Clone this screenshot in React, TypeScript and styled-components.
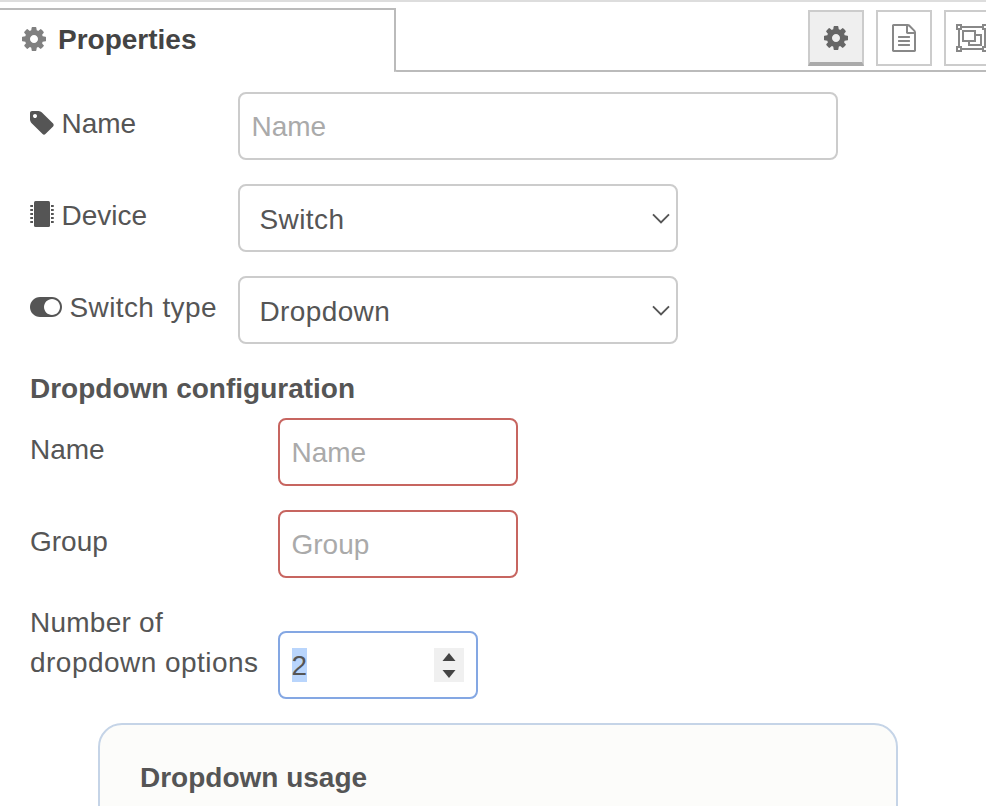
import React from "react";
import styled, { createGlobalStyle, css } from "styled-components";

const GlobalStyle = createGlobalStyle`
  *, *::before, *::after { box-sizing: border-box; }
  body {
    margin: 0;
    background: #fff;
    overflow: hidden;
  }
`;

const Editor = styled.main`
  width: 986px;
  height: 806px;
  overflow: hidden;
  border-top: 2px solid #ddd;
  background: #fff;
  color: #555;
  font: 28px/40px "Liberation Sans", Arial, sans-serif;
`;

const TabBar = styled.header`
  display: flex;
  height: 70px;
  padding-top: 6px;
`;

const ActiveTab = styled.div`
  display: flex;
  align-items: center;
  gap: 12px;
  width: 396px;
  height: 64px;
  padding: 0 0 4px 22px;
  border-top: 2px solid #bbb;
  border-right: 2px solid #bbb;
  border-bottom-right-radius: 2px;
  color: #444;
  font-weight: bold;
`;

const Text = styled.span<{ $spacing?: number }>`
  padding-top: 2px;
  letter-spacing: ${(p) => p.$spacing ?? 0}px;
`;

const TabActions = styled.div`
  display: flex;
  flex: 1;
  gap: 12px;
  height: 64px;
  margin-left: -2px;
  padding: 2px 0 0 414px;
  border-bottom: 2px solid #bbb;
  border-bottom-left-radius: 3px;
  overflow: hidden;
`;

const TabButton = styled.button<{ $active?: boolean }>`
  display: flex;
  flex: none;
  align-items: center;
  justify-content: center;
  width: 56px;
  height: 56px;
  padding: 0;
  border: 2px solid #ccc;
  background: #fff;
  color: #888;
  ${(p) =>
    p.$active &&
    css`
      border-bottom: 4px solid #aaa;
      padding-top: 2px;
      background: #efefef;
      color: #666;
    `}
`;

const Icon = styled.svg<{ $tone?: string }>`
  display: block;
  flex: none;
  fill: ${(p) => p.$tone ?? "currentColor"};
`;

const Form = styled.form`
  display: flex;
  flex-direction: column;
  padding: 20px 30px 0;
`;

const Row = styled.div<{ $labelWidth: number }>`
  display: grid;
  grid-template-columns: ${(p) => p.$labelWidth}px auto;
  justify-content: start;
  margin-bottom: 24px;
`;

const Label = styled.label<{ $gap?: number }>`
  display: flex;
  align-items: center;
  align-self: start;
  gap: ${(p) => p.$gap ?? 7.5}px;
  height: 40px;
  margin-top: 11px;
  white-space: nowrap;
`;

const WrappedLabel = styled.label`
  display: flex;
  flex-direction: column;
  width: 240px;
  padding-top: 1px;
`;

const LabelLine = styled.span<{ $spacing: number }>`
  height: 40px;
  letter-spacing: ${(p) => p.$spacing}px;
  white-space: nowrap;
`;

const box = css`
  height: 68px;
  border: 2px solid #ccc;
  border-radius: 8px;
  background: #fff;
  color: #555;
  font: inherit;
`;

const TextInput = styled.input<{ $width: number; $invalid?: boolean }>`
  ${box}
  width: ${(p) => p.$width}px;
  padding: 2px 12px 0 11.5px;
  border-color: ${(p) => (p.$invalid ? "#c76560" : "#ccc")};
  outline: none;
  &::placeholder {
    color: #aaa;
    opacity: 1;
  }
`;

const Select = styled.div`
  ${box}
  display: flex;
  align-items: center;
  justify-content: space-between;
  width: 440px;
  padding: 2px 6px 0 19.5px;
`;

const NumberInput = styled.div`
  ${box}
  display: flex;
  align-items: center;
  justify-content: space-between;
  width: 200px;
  margin-top: 29px;
  padding: 0 12px;
  border-color: #84a7e3;
`;

const Selected = styled.span`
  width: 15px;
  height: 34px;
  background: #b9d5fc;
  line-height: 36px;
  text-indent: -0.5px;
`;

const Stepper = styled.span`
  display: flex;
  align-items: center;
  justify-content: center;
  width: 30px;
  height: 34px;
  background: #f0f0f0;
`;

const Heading = styled.h4<{ $after?: number }>`
  margin: 0 0 ${(p) => p.$after ?? 0}px;
  padding-top: 1px;
  font: bold 28px/40px "Liberation Sans", Arial, sans-serif;
`;

const Usage = styled.section`
  width: 800px;
  height: 240px;
  margin-left: 68px;
  padding: 32px 40px;
  border: 2px solid #c5d4e7;
  border-radius: 24px;
  background: #fcfcfa;
`;

const CogIcon = ({ tone }: { tone?: string }) => (
  <Icon $tone={tone} width="24" height="24" viewBox="128 128 1536 1536">
    <path d="M1152 896q0-106-75-181t-181-75-181 75-75 181 75 181 181 75 181-75 75-181zm512-109v222q0 12-8 23t-20 13l-185 28q-19 54-39 91 35 50 107 138 10 12 10 25t-9 23q-27 37-99 108t-94 71q-12 0-26-9l-138-108q-44 23-91 38-16 136-29 186-7 28-36 28h-222q-14 0-24.5-8.5t-11.5-21.5l-28-184q-49-16-90-37l-141 107q-10 9-25 9-14 0-25-11-126-114-165-168-7-10-7-23 0-12 8-23 15-21 51-66.5t54-70.5q-27-50-41-99l-183-27q-13-2-21-12.5t-8-23.5v-222q0-12 8-23t19-13l186-28q14-46 39-92-40-57-107-138-10-12-10-24 0-10 9-23 26-36 98.5-107.5t94.5-71.5q13 0 26 10l138 107q44-23 91-38 16-136 29-186 7-28 36-28h222q14 0 24.5 8.5t11.5 21.5l28 184q49 16 90 37l142-107q9-9 24-9 13 0 25 10 129 119 165 170 7 8 7 22 0 12-8 23-15 21-51 66.5t-54 70.5q26 50 41 98l183 28q13 2 21 12.5t8 23.5z" />
  </Icon>
);

const FileIcon = () => (
  <Icon width="24" height="28" viewBox="128 0 1536 1792">
    <path d="M1596 380q28 28 48 76t20 88v1152q0 40-28 68t-68 28h-1344q-40 0-68-28t-28-68v-1600q0-40 28-68t68-28h896q40 0 88 20t76 48zm-444-244v376h376q-10-29-22-41l-313-313q-12-12-41-22zm384 1528v-1024h-416q-40 0-68-28t-28-68v-416h-768v1536h1280zm-1024-864q0-14 9-23t23-9h704q14 0 23 9t9 23v64q0 14-9 23t-23 9h-704q-14 0-23-9t-9-23v-64zm736 224q14 0 23 9t9 23v64q0 14-9 23t-23 9h-704q-14 0-23-9t-9-23v-64q0-14 9-23t23-9h704zm0 256q14 0 23 9t9 23v64q0 14-9 23t-23 9h-704q-14 0-23-9t-9-23v-64q0-14 9-23t23-9h704z" />
  </Icon>
);

const GroupIcon = () => (
  <Icon $tone="none" width="32" height="28" viewBox="0 0 32 28" stroke="currentColor" strokeWidth="2">
    <path d="M6 3h20M6 25h20M3 6v16M29 6v16" />
    <path d="M1 1h4v4h-4zM27 1h4v4h-4zM1 23h4v4h-4zM27 23h4v4h-4z" />
    <path d="M7 7h12v10h-12zM20 11h5v10h-12v-3" />
  </Icon>
);

const TagIcon = () => (
  <Icon width="24" height="24" viewBox="128 128 1536 1536">
    <path d="M576 448q0-53-37.5-90.5t-90.5-37.5-90.5 37.5-37.5 90.5 37.5 90.5 90.5 37.5 90.5-37.5 37.5-90.5zm1067 576q0 53-37 90l-491 492q-39 37-91 37-53 0-90-37l-715-716q-38-37-64.5-101t-26.5-117v-416q0-52 38-90t90-38h416q53 0 117 26.5t102 64.5l715 714q37 39 37 91z" />
  </Icon>
);

const ChipIcon = () => (
  <Icon width="24" height="28" viewBox="0 0 24 28">
    <rect x="4" y="0" width="16" height="26" rx="1.5" />
    {[4, 8, 12, 16, 20].map((y) => (
      <path key={y} d={`M1 ${y}h2v2h-2l-1-.5v-1zM21 ${y}h2l1 .5v1l-1 .5h-2z`} />
    ))}
  </Icon>
);

const ToggleIcon = () => (
  <Icon width="32" height="20" viewBox="0 256 2048 1280">
    <path d="M0 896q0-130 51-248.5t136.5-204 204-136.5 248.5-51h768q130 0 248.5 51t204 136.5 136.5 204 51 248.5-51 248.5-136.5 204-204 136.5-248.5 51h-768q-130 0-248.5-51t-204-136.5-136.5-204-51-248.5zm1408 512q104 0 198.5-40.5t163.5-109.5 109.5-163.5 40.5-198.5-40.5-198.5-109.5-163.5-163.5-109.5-198.5-40.5-198.5 40.5-163.5 109.5-109.5 163.5-40.5 198.5 40.5 198.5 109.5 163.5 163.5 109.5 198.5 40.5z" />
  </Icon>
);

const ChevronIcon = () => (
  <Icon $tone="none" width="18" height="12" viewBox="0 0 18 12" stroke="#555" strokeWidth="1.9">
    <path d="M1 1.3l8 8 8-8" />
  </Icon>
);

const StepperArrows = () => (
  <Icon $tone="#444" width="14" height="26" viewBox="0 0 14 26">
    <path d="M0.5 9l6.5-8 6.5 8zM0.5 18l6.5 8 6.5-8z" />
  </Icon>
);

export default function App() {
  return (
    <>
      <GlobalStyle />
      <Editor>
        <TabBar>
          <ActiveTab>
            <CogIcon tone="#808080" />
            <Text>Properties</Text>
          </ActiveTab>
          <TabActions>
            <TabButton $active aria-label="Properties">
              <CogIcon />
            </TabButton>
            <TabButton aria-label="Description">
              <FileIcon />
            </TabButton>
            <TabButton aria-label="Appearance">
              <GroupIcon />
            </TabButton>
          </TabActions>
        </TabBar>
        <Form>
          <Row $labelWidth={208}>
            <Label>
              <TagIcon />
              <Text>Name</Text>
            </Label>
            <TextInput $width={600} placeholder="Name" />
          </Row>
          <Row $labelWidth={208}>
            <Label>
              <ChipIcon />
              <Text>Device</Text>
            </Label>
            <Select>
              <Text $spacing={0.4}>Switch</Text>
              <ChevronIcon />
            </Select>
          </Row>
          <Row $labelWidth={208}>
            <Label>
              <ToggleIcon />
              <Text $spacing={0.38}>Switch type</Text>
            </Label>
            <Select>
              <Text $spacing={0.38}>Dropdown</Text>
              <ChevronIcon />
            </Select>
          </Row>
          <Heading $after={9}>Dropdown configuration</Heading>
          <Row $labelWidth={248}>
            <Label>
              <Text>Name</Text>
            </Label>
            <TextInput $width={240} $invalid placeholder="Name" />
          </Row>
          <Row $labelWidth={248}>
            <Label>
              <Text>Group</Text>
            </Label>
            <TextInput $width={240} $invalid placeholder="Group" />
          </Row>
          <Row $labelWidth={248}>
            <WrappedLabel>
              <LabelLine $spacing={0.25}>Number of </LabelLine>
              <LabelLine $spacing={0.47}>dropdown options</LabelLine>
            </WrappedLabel>
            <NumberInput>
              <Selected>2</Selected>
              <Stepper>
                <StepperArrows />
              </Stepper>
            </NumberInput>
          </Row>
          <Usage>
            <Heading>Dropdown usage</Heading>
          </Usage>
        </Form>
      </Editor>
    </>
  );
}
